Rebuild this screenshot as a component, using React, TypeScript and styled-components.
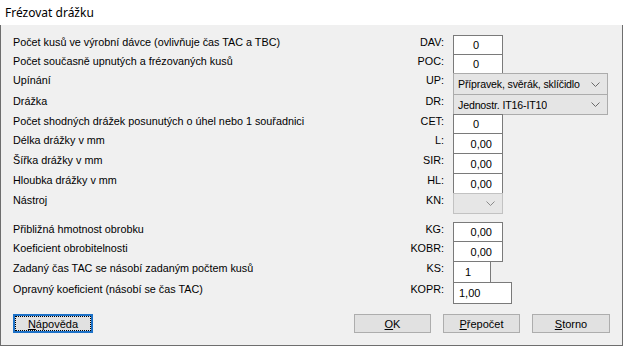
import React from "react";
import styled, {createGlobalStyle} from "styled-components";

const GlobalStyle = createGlobalStyle`
  html, body {
    margin: 0;
    padding: 0;
    background: #ffffff;
  }

  body {
    font-family: "Liberation Sans", Arial, sans-serif;
    font-size: 10.8px;
    color: #000000;
  }
`;

const Dialog = styled.div`
  display: flex;
  flex-flow: column nowrap;
  width: 623px;
  height: 346px;
  box-sizing: border-box;
`;

const TitleBar = styled.header`
  display: flex;
  align-items: center;
  height: 25px;
  padding-left: 5px;
  padding-bottom: 1px;
  box-sizing: border-box;
  background: #ffffff;
  font-family: "Noto Sans", "Open Sans", sans-serif;
  font-size: 12px;
`;

const Body = styled.div`
  flex: 1;
  display: flex;
  flex-flow: column nowrap;
  padding: 10px 0 0 12px;
  background: #f0f0f0;
  border: 1px solid #6e6e6e;
  border-top: none;
`;

const Section = styled.div<{ $gap?: number }>`
  display: flex;
  flex-flow: column nowrap;
  margin-top: ${p => p.$gap ?? 0}px;
`;

const Row = styled.div<{ $h: number }>`
  display: grid;
  grid-template-columns: 368px 63px 164px;
  align-items: start;
  height: ${p => p.$h}px;
`;

const Label = styled.span`
  line-height: 14px;
  white-space: nowrap;
`;

const Code = styled.span`
  line-height: 14px;
  text-align: right;
`;

const FieldCell = styled.div`
  display: flex;
  padding-left: 9px;
`;

const TextBox = styled.div<{ $w: number; $align: "left" | "center" | "right"; $h: number; $pad: number }>`
  display: flex;
  align-items: center;
  justify-content: ${p => p.$align === "left" ? "flex-start" : p.$align === "right" ? "flex-end" : "center"};
  width: ${p => p.$w}px;
  height: ${p => p.$h}px;
  box-sizing: border-box;
  padding: 0 ${p => p.$align === "right" ? p.$pad : 4}px 0 ${p => p.$align === "left" ? p.$pad : 0}px;
  background: #ffffff;
  border: 1px solid #7a7a7a;
  font-size: 11px;
`;

const Select = styled.div<{ $w: number; $h: number; $disabled?: boolean }>`
  display: flex;
  align-items: center;
  justify-content: space-between;
  gap: 4px;
  width: ${p => p.$w}px;
  height: ${p => p.$h}px;
  box-sizing: border-box;
  padding: 0 7px 0 4px;
  background: ${p => p.$disabled ? "#e6e6e6" : "#e5e5e5"};
  border: 1px solid ${p => p.$disabled ? "#c2c2c2" : "#acacac"};
  font-size: 10.6px;
  letter-spacing: -0.15px;
  white-space: nowrap;
`;

const SelectValue = styled.span`
  min-width: 0;
  overflow: hidden;
`;

const Chevron = styled.svg`
  flex: none;
`;

const ButtonRow = styled.div`
  display: flex;
  justify-content: space-between;
  align-items: center;
  margin-top: 11px;
  padding-right: 12px;
`;

const ButtonGroup = styled.div`
  display: flex;
  gap: 12px;
`;

const Button = styled.div<{ $w: number; $focused?: boolean }>`
  display: flex;
  align-items: center;
  justify-content: center;
  width: ${p => p.$w}px;
  height: 19px;
  box-sizing: border-box;
  background: #e1e1e1;
  border: ${p => p.$focused ? "2px solid #1e72c8" : "1px solid #adadad"};
  font-size: 11px;
`;

const FocusRing = styled.span`
  display: flex;
  align-items: center;
  justify-content: center;
  width: 100%;
  height: 100%;
  box-sizing: border-box;
  border: 1px dotted #000000;
`;

const Mnemonic = styled.span`
  text-decoration: underline;
`;

type Field =
    | { kind: "text"; value: string; w: number; align: "left" | "center" | "right"; pad?: number }
    | { kind: "select"; value: string; w: number; disabled?: boolean };

interface IRow {
    label: string;
    code: string;
    h: number;
    field: Field;
}

const topRows: IRow[] = [
    {label: "Počet kusů ve výrobní dávce (ovlivňuje čas TAC a TBC)", code: "DAV:", h: 19, field: {kind: "text", value: "0", w: 50, align: "center"}},
    {label: "Počet současně upnutých a frézovaných kusů", code: "POC:", h: 19, field: {kind: "text", value: "0", w: 50, align: "center"}},
    {label: "Upínání", code: "UP:", h: 21, field: {kind: "select", value: "Přípravek, svěrák, sklíčidlo", w: 164}},
    {label: "Drážka", code: "DR:", h: 20, field: {kind: "select", value: "Jednostr. IT16-IT10", w: 164}},
    {label: "Počet shodných drážek posunutých o úhel nebo 1 souřadnici", code: "CET:", h: 19, field: {kind: "text", value: "0", w: 50, align: "center"}},
    {label: "Délka drážky v mm", code: "L:", h: 20, field: {kind: "text", value: "0,00", w: 50, align: "right"}},
    {label: "Šířka drážky v mm", code: "SIR:", h: 20, field: {kind: "text", value: "0,00", w: 50, align: "right"}},
    {label: "Hloubka drážky v mm", code: "HL:", h: 20, field: {kind: "text", value: "0,00", w: 50, align: "right"}},
    {label: "Nástroj", code: "KN:", h: 20, field: {kind: "select", value: "", w: 50, disabled: true}},
];

const bottomRows: IRow[] = [
    {label: "Přibližná hmotnost obrobku", code: "KG:", h: 19, field: {kind: "text", value: "0,00", w: 50, align: "right"}},
    {label: "Koeficient obrobitelnosti", code: "KOBR:", h: 20, field: {kind: "text", value: "0,00", w: 50, align: "right"}},
    {label: "Zadaný čas TAC se násobí zadaným počtem kusů", code: "KS:", h: 21, field: {kind: "text", value: "1", w: 38, align: "left", pad: 11}},
    {label: "Opravný koeficient (násobí se čas TAC)", code: "KOPR:", h: 21, field: {kind: "text", value: "1,00", w: 59, align: "left", pad: 5}},
];

const ChevronIcon = ({disabled}: { disabled?: boolean }) => (
    <Chevron width="9" height="5" viewBox="0 0 9 5">
        <polyline points="0.5,0.5 4.5,4.5 8.5,0.5" fill="none" stroke={disabled ? "#8a8a8a" : "#6a6a6a"} strokeWidth="1"/>
    </Chevron>
);

const FormRow = ({row}: { row: IRow }) => {
    const f = row.field;
    return (
        <Row $h={row.h}>
            <Label>{row.label}</Label>
            <Code>{row.code}</Code>
            <FieldCell>
                {f.kind === "text" ? (
                    <TextBox $w={f.w} $h={row.h + 1} $align={f.align} $pad={f.pad ?? 10}>{f.value}</TextBox>
                ) : (
                    <Select $w={f.w} $h={row.h + 1} $disabled={f.disabled}>
                        <SelectValue>{f.value}</SelectValue>
                        <ChevronIcon disabled={f.disabled}/>
                    </Select>
                )}
            </FieldCell>
        </Row>
    );
};

export default function App() {
    return (
        <>
            <GlobalStyle/>
            <Dialog>
                <TitleBar>Frézovat drážku</TitleBar>
                <Body>
                    <Section>
                        {topRows.map(r => <FormRow key={r.code} row={r}/>)}
                    </Section>
                    <Section $gap={9}>
                        {bottomRows.map(r => <FormRow key={r.code} row={r}/>)}
                    </Section>
                    <ButtonRow>
                        <Button $w={80} $focused>
                            <FocusRing><Mnemonic>N</Mnemonic>ápověda</FocusRing>
                        </Button>
                        <ButtonGroup>
                            <Button $w={77}><Mnemonic>O</Mnemonic>K</Button>
                            <Button $w={77}><Mnemonic>P</Mnemonic>řepočet</Button>
                            <Button $w={78}><Mnemonic>S</Mnemonic>torno</Button>
                        </ButtonGroup>
                    </ButtonRow>
                </Body>
            </Dialog>
        </>
    );
}
